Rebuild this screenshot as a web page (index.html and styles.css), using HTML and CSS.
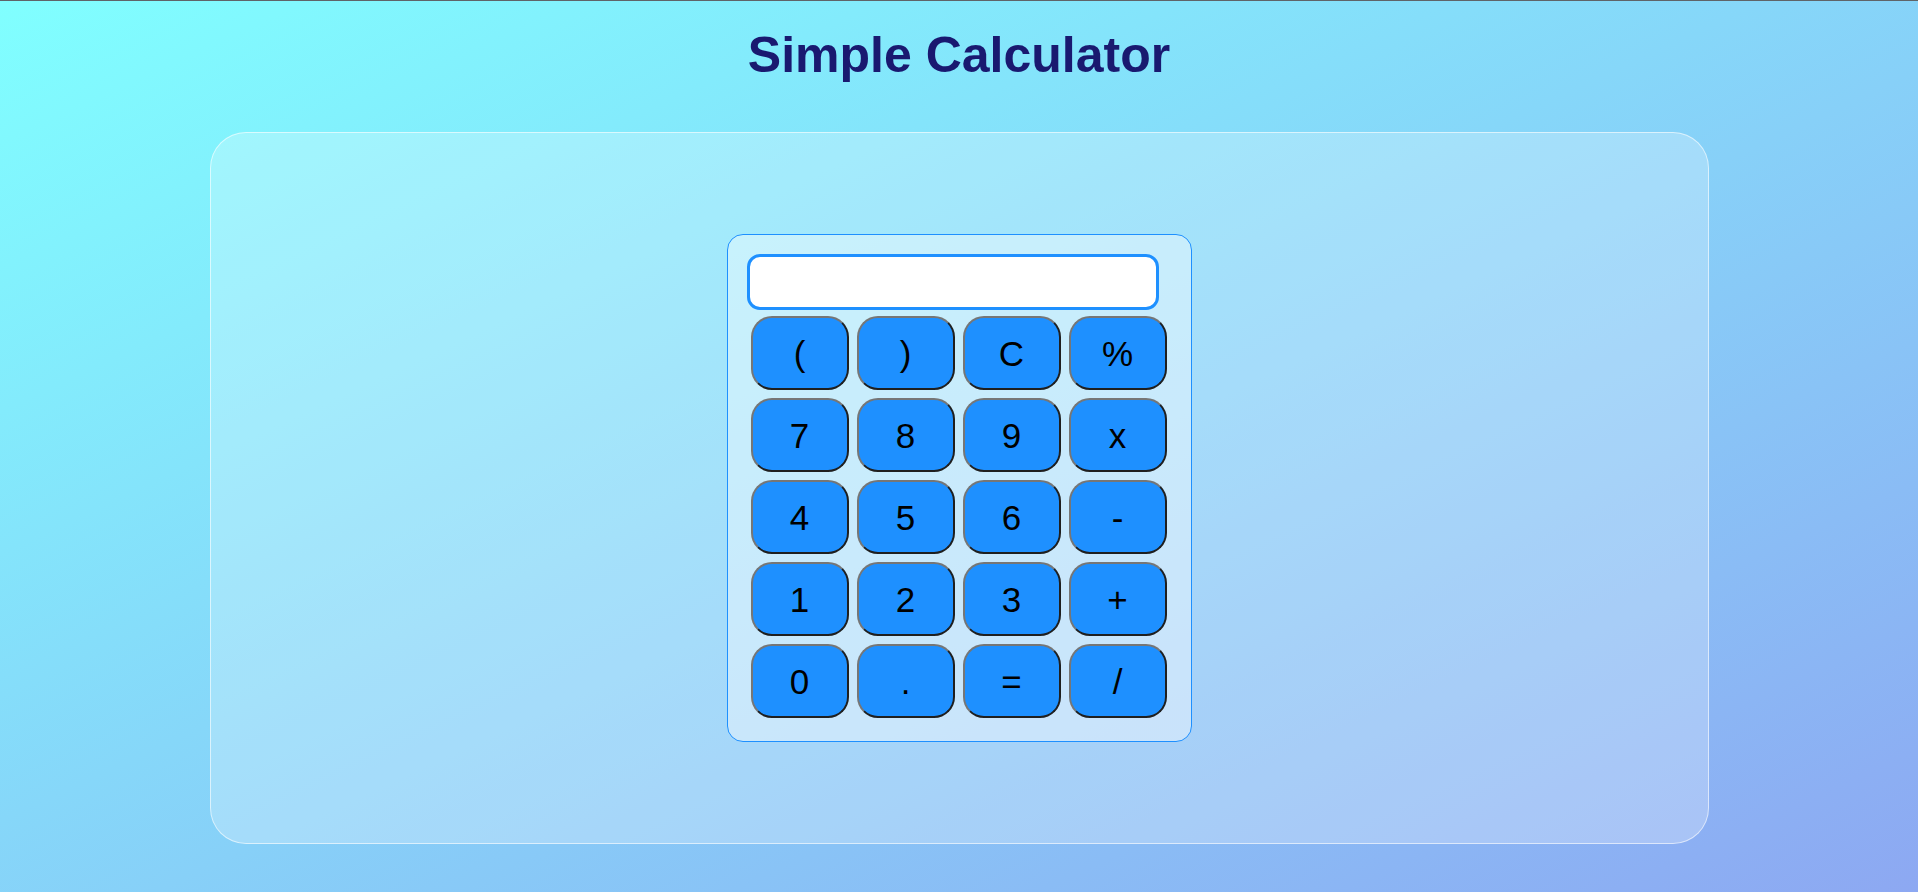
FILE: index.html
```html
<!DOCTYPE html>
<html lang="en">
<head>
<meta charset="utf-8">
<title>Simple Calculator</title>
<link rel="stylesheet" href="styles.css">
</head>
<body>
  <h1 class="title">Simple Calculator</h1>
  <main class="panel">
    <div class="calc">
      <input class="display" type="text" value="" aria-label="display">
      <div class="keypad">
        <button class="key">(</button>
        <button class="key">)</button>
        <button class="key">C</button>
        <button class="key">%</button>
        <button class="key">7</button>
        <button class="key">8</button>
        <button class="key">9</button>
        <button class="key">x</button>
        <button class="key">4</button>
        <button class="key">5</button>
        <button class="key">6</button>
        <button class="key">-</button>
        <button class="key">1</button>
        <button class="key">2</button>
        <button class="key">3</button>
        <button class="key">+</button>
        <button class="key">0</button>
        <button class="key">.</button>
        <button class="key">=</button>
        <button class="key">/</button>
      </div>
    </div>
  </main>
</body>
</html>
```
FILE: styles.css
```css
html {
  height: 100%;
}

body {
  margin: 0;
  min-height: 100%;
  box-sizing: border-box;
  border-top: 1px solid #5f6468;
  background: linear-gradient(to bottom right, #80ffff, #8da8f2);
  font-family: "Liberation Sans", Arial, sans-serif;
  display: flex;
  flex-direction: column;
  align-items: center;
}

.title {
  margin: 26px 0 0;
  font-size: 50px;
  font-weight: bold;
  color: #191970;
  line-height: 57px;
}

.panel {
  margin-top: 48px;
  width: 1499px;
  height: 712px;
  box-sizing: border-box;
  border: 1px solid rgba(255, 255, 255, 0.6);
  border-radius: 36px;
  background: rgba(255, 255, 255, 0.25);
  display: flex;
  align-items: center;
  justify-content: center;
}

.calc {
  width: 465px;
  box-sizing: border-box;
  border: 1px solid #1e90ff;
  border-radius: 16px;
  background: rgba(255, 255, 255, 0.4);
  padding: 19px 20px 23px 19px;
  display: flex;
  flex-direction: column;
  align-items: flex-start;
}

.display {
  width: 412px;
  height: 56px;
  box-sizing: border-box;
  border: 3px solid #1e90ff;
  border-radius: 13px;
  background: #ffffff;
  outline: none;
  font-family: "Liberation Sans", Arial, sans-serif;
  font-size: 28px;
  padding: 0 12px;
  margin: 0;
}

.keypad {
  margin: 6px 0 0 4px;
  display: grid;
  grid-template-columns: repeat(4, 98px);
  grid-auto-rows: 74px;
  gap: 8px;
}

.key {
  margin: 0;
  padding: 0;
  background: #1e90ff;
  border: 2px solid;
  border-color: #767676 #1f1f1f #1f1f1f #767676;
  border-radius: 21px;
  color: #000000;
  font-family: "Liberation Sans", Arial, sans-serif;
  font-size: 35px;
  line-height: 1;
  cursor: pointer;
}
```
